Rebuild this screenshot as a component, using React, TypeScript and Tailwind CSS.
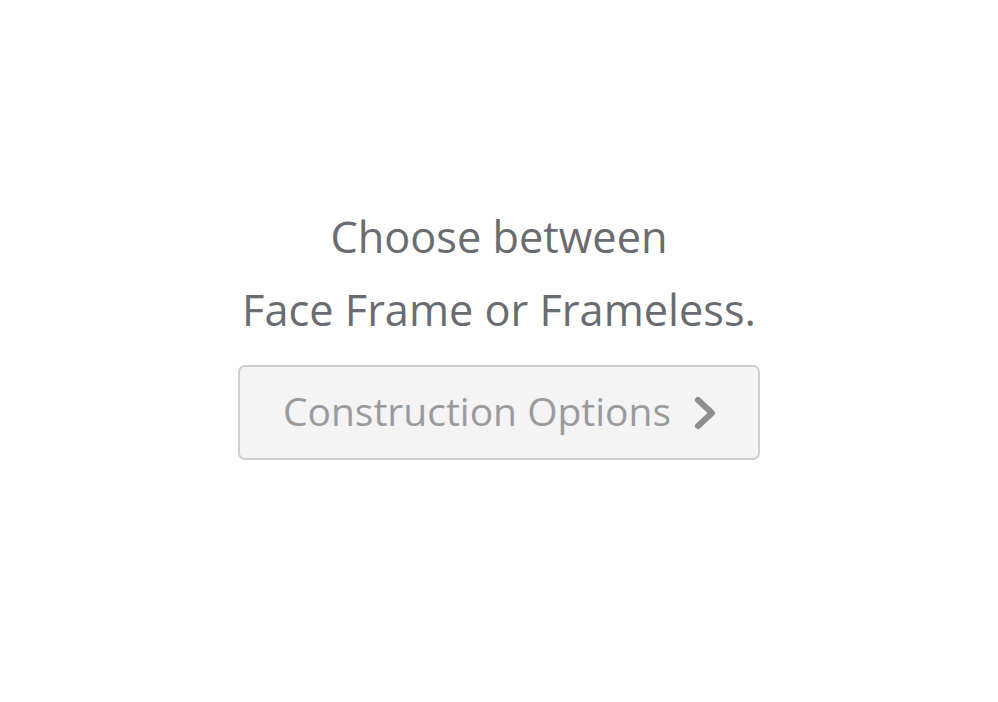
export default function App() {
  return (
    <div className="min-h-[702px] w-full bg-[#fefefe] flex flex-col items-center pt-[200px] font-['Open_Sans',sans-serif]">
      <h1 className="text-center text-[43.3px] leading-[73px] text-[#696c70] font-normal">
        Choose between
        <br />
        Face Frame or Frameless.
      </h1>
      <button className="mt-[19px] w-[522px] h-[95px] flex items-center justify-center gap-[22px] pl-[4px] bg-[#f4f4f4] border-2 border-[#cfcfcf] rounded-[7px] text-[39px] text-[#9a9b9d]">
        <span className="-mt-[2px]">Construction Options</span>
        <svg width="26" height="36" viewBox="0 0 26 36" fill="none">
          <path d="M5 5 L19 18 L5 31" stroke="#8e8f91" strokeWidth="6" strokeLinecap="round" strokeLinejoin="round" />
        </svg>
      </button>
    </div>
  );
}
